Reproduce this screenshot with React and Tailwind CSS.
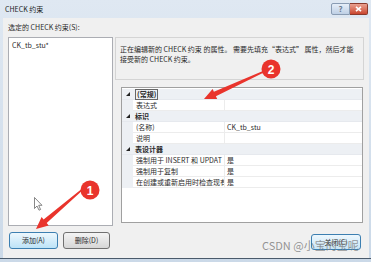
const rows = [
  { cat: '(常规)', selected: true },
  { label: '表达式', value: '' },
  { cat: '标识' },
  { label: '(名称)', value: 'CK_tb_stu' },
  { label: '说明', value: '' },
  { cat: '表设计器' },
  { label: '强制用于 INSERT 和 UPDAT', value: '是' },
  { label: '强制用于复制', value: '是' },
  { label: '在创建或重新启用时检查现有', value: '是' },
];

function arrowPoints(x1, y1, x2, y2) {
  const dx = x2 - x1;
  const dy = y2 - y1;
  const len = Math.hypot(dx, dy);
  const ux = dx / len;
  const uy = dy / len;
  const px = -uy;
  const py = ux;
  const head = 12;
  const hw = 5.5;
  const w0 = 0.8;
  const w1 = 2.4;
  const bx = x2 - ux * head;
  const by = y2 - uy * head;
  const pts = [
    [x1 + px * w0, y1 + py * w0],
    [bx + px * w1, by + py * w1],
    [bx + px * hw, by + py * hw],
    [x2, y2],
    [bx - px * hw, by - py * hw],
    [bx - px * w1, by - py * w1],
    [x1 - px * w0, y1 - py * w0],
  ];
  return pts.map((p) => p.map((v) => v.toFixed(1)).join(',')).join(' ');
}

function Triangle() {
  return (
    <svg width="4" height="4" viewBox="0 0 4 4">
      <path d="M4 0 L4 4 L0 4 Z" fill="#222" />
    </svg>
  );
}

function GridRow({ row }) {
  if (row.cat) {
    return (
      <div className="flex h-[11px] items-center bg-[#edf0f4] border-b border-[#e6e9ee]">
        <div className="w-[11px] flex justify-center shrink-0">
          <Triangle />
        </div>
        <span
          className={`ml-[2px] font-bold leading-none ${
            row.selected ? 'border border-[#666] px-[1px] py-[1px]' : ''
          }`}
        >
          {row.cat}
        </span>
      </div>
    );
  }
  return (
    <div className="flex h-[11px] items-stretch">
      <div className="w-[11px] shrink-0 bg-[#edf0f4]" />
      <div className="w-[92px] shrink-0 pl-[3px] flex items-center overflow-hidden whitespace-nowrap border-b border-r border-[#ececec]">
        {row.label}
      </div>
      <div className="flex-1 pl-[2px] flex items-center border-b border-[#ececec]">{row.value}</div>
    </div>
  );
}

export default function App() {
  return (
    <div className="relative w-[371px] h-[262px] overflow-hidden bg-gradient-to-b from-[#dfe8f2] to-[#cbd9e8] font-['Noto_Sans_CJK_SC','Liberation_Sans',sans-serif] text-[7px] text-[#2a2a2a]">
      {/* title bar */}
      <div className="h-[18px] flex items-start">
        <span className="pl-[5px] pt-[4px] leading-[10px] text-[#1a1a1a]">CHECK 约束</span>
        <div className="ml-auto mr-[3px] mt-[3px] flex">
          <div className="w-[19px] h-[12px] rounded-l-[2px] border border-[#8a9cb3] bg-gradient-to-b from-[#e6eef8] to-[#bfd0e5] flex items-center justify-center text-[8px] leading-none text-[#6a7a90] font-bold">
            ?
          </div>
          <div className="w-[18px] h-[12px] rounded-r-[2px] border border-l-0 border-[#8a3a2c] bg-gradient-to-b from-[#e9a08f] to-[#c9452f] flex items-center justify-center">
            <svg width="7" height="6" viewBox="0 0 7 6">
              <path d="M1 0.8 L6 5.2 M6 0.8 L1 5.2" stroke="#fff" strokeWidth="1.6" />
            </svg>
          </div>
        </div>
      </div>

      {/* body */}
      <div className="ml-[3px] mr-[2px] h-[240px] bg-[#f0f0f0] flex flex-col px-[5px]">
        <div className="h-[19px] flex items-center">选定的 CHECK 约束(S):</div>
        <div className="flex gap-[2px] h-[189px]">
          <div className="w-[105px] h-full bg-white border border-[#abadb3] pl-[3px] pt-[2px]">
            <div className="leading-[10px]">CK_tb_stu*</div>
          </div>
          <div className="flex-1 flex flex-col">
            <div className="h-[43px] border border-[#d4d4d4] pl-[4px] pt-[6px] leading-[10px] overflow-hidden whitespace-nowrap">
              <div>正在编辑新的 CHECK 约束 的属性。 需要先填充“表达式” 属性，然后才能</div>
              <div>接受新的 CHECK 约束。</div>
            </div>
            <div className="ml-[6px] mr-[1px] mt-[7px] h-[136px] border border-[#a0a0a0] bg-white pt-[1px] flex flex-col">
              {rows.map((r, i) => (
                <GridRow key={i} row={r} />
              ))}
            </div>
          </div>
        </div>
        <div className="flex mt-[6px] h-[17px] pl-[1px]">
          <div className="w-[49px] h-[17px] rounded-[3px] border border-[#3c7fb1] bg-gradient-to-b from-[#edf7fd] to-[#bde3f7] flex items-center justify-center">
            添加(A)
          </div>
          <div className="ml-[5px] w-[47px] h-[17px] rounded-[3px] border border-[#707070] bg-gradient-to-b from-[#f4f4f4] to-[#d6d6d6] flex items-center justify-center">
            删除(D)
          </div>
          <div className="ml-auto mr-[3px] mt-[2px] w-[50px] h-[16px] rounded-[3px] border border-[#3c7fb1] bg-gradient-to-b from-[#edf7fd] to-[#c9e6f6] flex items-center justify-center">
            关闭(C)
          </div>
        </div>
      </div>
      <div className="border-t border-[#4a5a6b] h-[4px]" />

      {/* annotations */}
      <svg className="absolute inset-0 pointer-events-none" width="371" height="262" viewBox="0 0 371 262">
        <polygon points={arrowPoints(84, 188, 36, 229)} fill="#e9342c" />
        <circle cx="90" cy="190" r="9.5" fill="#e9342c" />
        <text x="90" y="194.5" textAnchor="middle" fontSize="12" fontWeight="bold" fill="#fff" fontFamily="Liberation Sans, sans-serif">
          1
        </text>
        <polygon points={arrowPoints(265, 71, 204, 99)} fill="#e9342c" />
        <circle cx="271" cy="69" r="9.5" fill="#e9342c" />
        <text x="271" y="73.5" textAnchor="middle" fontSize="12" fontWeight="bold" fill="#fff" fontFamily="Liberation Sans, sans-serif">
          2
        </text>
        <path d="M34.5 197.5 V208.5 L37 206 L39 210.2 L40.6 209.5 L38.7 205.3 H42 Z" fill="#fff" stroke="#555" strokeWidth="0.7" />
      </svg>
      <div className="absolute left-[262px] top-[238px] text-[11px] leading-[14px] text-[#7a7a7a]/80 whitespace-nowrap pointer-events-none">
        CSDN @小宝的宝呢
      </div>
    </div>
  );
}
